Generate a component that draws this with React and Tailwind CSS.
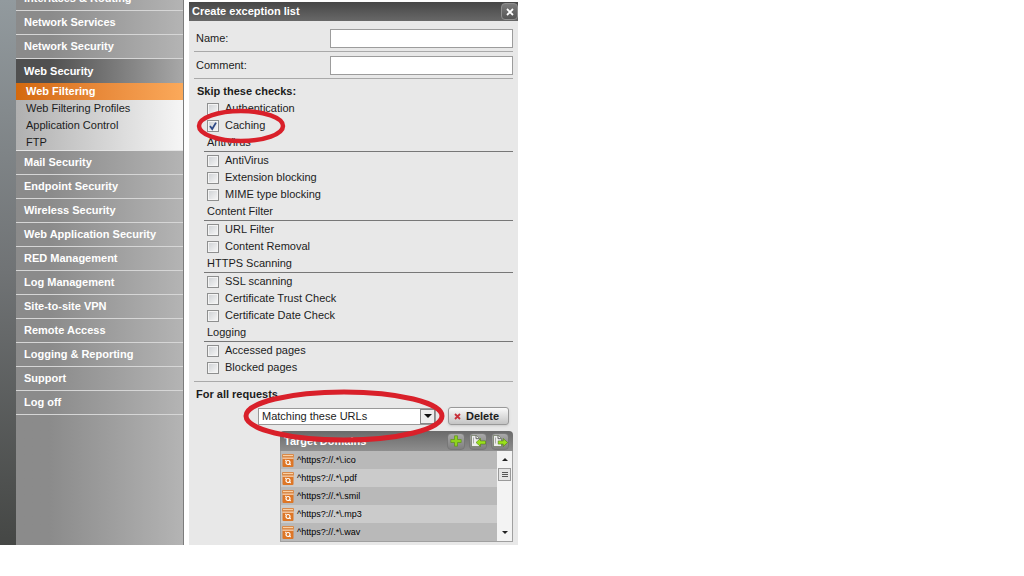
import React, { useState } from 'react';

const topItems = ['Interfaces & Routing', 'Network Services', 'Network Security'];

const subItems = ['Web Filtering', 'Web Filtering Profiles', 'Application Control', 'FTP'];

const bottomItems = [
    'Mail Security',
    'Endpoint Security',
    'Wireless Security',
    'Web Application Security',
    'RED Management',
    'Log Management',
    'Site-to-site VPN',
    'Remote Access',
    'Logging & Reporting',
    'Support',
    'Log off',
];

const sections = [
    { title: 'AntiVirus', checks: ['AntiVirus', 'Extension blocking', 'MIME type blocking'] },
    { title: 'Content Filter', checks: ['URL Filter', 'Content Removal'] },
    { title: 'HTTPS Scanning', checks: ['SSL scanning', 'Certificate Trust Check', 'Certificate Date Check'] },
    { title: 'Logging', checks: ['Accessed pages', 'Blocked pages'] },
];

const domains = ['^https?://.*\\.ico', '^https?://.*\\.pdf', '^https?://.*\\.smil', '^https?://.*\\.mp3', '^https?://.*\\.wav'];

function MenuItem({ label }) {
    return (
        <a href="#" className="flex h-6 items-center border-b border-[#d6d6d6] pl-2 font-bold text-white">
            {label}
        </a>
    );
}

function Sidebar() {
    return (
        <nav className="w-42 shrink-0 overflow-hidden border-r border-[#7c7c7c] bg-linear-to-r from-[#8b8b8b] from-20% to-[#b4b4b4]">
            <div className="-mt-[13px]">
                {topItems.map((item) => (
                    <MenuItem key={item} label={item} />
                ))}
                <a href="#" className="flex h-6 items-center bg-linear-to-r from-[#505050] from-20% to-[#a8a8a8] pl-2 font-bold text-white">
                    Web Security
                </a>
                <div className="h-17 border-b border-[#e4e4e4] bg-linear-to-r from-[#b0b0b0] to-[#f6f6f6]">
                    {subItems.map((item, i) => (
                        <a
                            key={item}
                            href="#"
                            className={
                                i === 0
                                    ? 'flex h-[17px] items-center bg-linear-to-r from-[#d4690c] to-[#fba95a] pl-[10px] font-bold text-white'
                                    : 'flex h-[17px] items-center pl-[10px] text-[#1c1c1c]'
                            }
                        >
                            {item}
                        </a>
                    ))}
                </div>
                {bottomItems.map((item) => (
                    <MenuItem key={item} label={item} />
                ))}
            </div>
        </nav>
    );
}

function Check({ label, defaultChecked, children }) {
    const [checked, setChecked] = useState(!!defaultChecked);
    return (
        <label className="relative flex h-[17px] items-center gap-[6px] pl-[18px]">
            <span className="relative flex size-3">
                <input
                    type="checkbox"
                    checked={checked}
                    onChange={(e) => setChecked(e.target.checked)}
                    className="size-3 appearance-none border border-[#8e8f8f] bg-linear-to-br from-[#cdd0d3] to-[#f8f8f8] shadow-[inset_0_0_0_1px_#f4f4f4]"
                />
                {checked && (
                    <svg viewBox="0 0 12 12" className="pointer-events-none absolute inset-0 size-3">
                        <path d="M3 6l2.2 3L9 2.6" fill="none" stroke="#2f4a86" strokeWidth="1.8" />
                    </svg>
                )}
            </span>
            {label}
            {children}
        </label>
    );
}

function Field({ id, label }) {
    return (
        <div className="flex items-center border-b border-[#a9a9a9] pt-1 pb-[3px] pl-[2px]">
            <label htmlFor={id} className="flex-1">{label}</label>
            <input id={id} type="text" className="h-[19px] w-[183px] border border-[#9c9c9c] bg-white px-1" />
        </div>
    );
}

function DomainIcon() {
    return (
        <svg viewBox="0 0 12 13" className="h-[13px] w-3 shrink-0">
            <rect x="0" y="0" width="12" height="4" rx="1" fill="#d98a4a" />
            <path d="M1 1.5h10" stroke="#f9cfa2" />
            <path d="M0.5 4h11v8a1 1 0 0 1-1 1h-9a1 1 0 0 1-1-1z" fill="#dd7626" />
            <path d="M0.5 4.2h11" stroke="#fbe3cb" />
            <circle cx="6" cy="8.5" r="2" fill="none" stroke="#fff" strokeWidth="1.2" />
            <path d="M3 6.3h1.4M7.4 10l1.6 1" stroke="#fff" />
        </svg>
    );
}

function ToolButton({ label, children }) {
    return (
        <button type="button" aria-label={label} className="flex h-[17px] w-[18px] items-center justify-center rounded-sm border border-[#777] bg-linear-to-b from-[#a9a9a9] to-[#7f7f7f]">
            {children}
        </button>
    );
}

function PageIcon({ arrow }) {
    return (
        <svg viewBox="0 0 16 14" className="h-[14px] w-4 shrink-0">
            <path d="M1.500 1.500h5L9.500 4.500v8h-8z" fill="#ececec" stroke="#5c6b4c" strokeWidth="0.6" />
            <path d="M6 1.500v3.200h3.300" fill="none" stroke="#555" strokeWidth="0.9" />
            <path d="M3.500 3.500v6" stroke="#999" strokeWidth="0.8" />
            <path d={arrow} fill="#9be01c" stroke="#4e7a10" strokeWidth="0.6" />
        </svg>
    );
}

function DomainList() {
    return (
        <div className="mt-[6px] mr-[5px] ml-[91px]">
            <div className="flex h-5 items-center gap-1 rounded-t-sm bg-linear-to-b from-[#6a6a6a] to-[#8e8e8e] px-1 text-white">
                <h3 className="flex-1 font-bold">Target Domains</h3>
                <ToolButton label="Add">
                    <svg viewBox="0 0 12 12" className="size-3 shrink-0">
                        <path d="M4.500 0.800h3v3.700h3.700v3H7.500v3.700h-3V7.500H0.800v-3h3.700z" fill="#8fd41c" stroke="#56861a" strokeWidth="0.6" />
                    </svg>
                </ToolButton>
                <ToolButton label="Import">
                    <PageIcon arrow="M6 8.500l4.500-4v2.400h5v3.200h-5v2.400z" />
                </ToolButton>
                <ToolButton label="Export">
                    <PageIcon arrow="M15.700 8.500l-4.500-4v2.400h-5v3.200h5v2.400z" />
                </ToolButton>
            </div>
            <div className="flex border-r border-b border-[#a0a0a0]">
                <ul className="flex-1 border-l border-[#a0a0a0] text-[9px] text-black">
                    {domains.map((d) => (
                        <li key={d} className="flex h-[18px] items-center gap-[3px] pl-px odd:bg-[#b9b9b9] even:bg-[#cbcbcb]">
                            <DomainIcon />
                            {d}
                        </li>
                    ))}
                </ul>
                <div className="flex w-[15px] flex-col items-center bg-[#f3f3f3]">
                    <button type="button" aria-label="Scroll up" className="flex h-[17px] w-full items-center justify-center">
                        <svg viewBox="0 0 6 3" className="h-[3px] w-[6px]"><path d="M0 3l3-3 3 3z" fill="#222" /></svg>
                    </button>
                    <div className="flex h-[13px] w-[13px] flex-col items-center justify-center gap-px border border-[#9a9a9a] bg-[#e4e4e4]">
                        <span className="h-px w-[6px] bg-[#555]" />
                        <span className="h-px w-[6px] bg-[#555]" />
                        <span className="h-px w-[6px] bg-[#555]" />
                    </div>
                    <button type="button" aria-label="Scroll down" className="mt-auto flex h-[17px] w-full items-center justify-center">
                        <svg viewBox="0 0 6 3" className="h-[3px] w-[6px]"><path d="M0 0l3 3 3-3z" fill="#222" /></svg>
                    </button>
                </div>
            </div>
        </div>
    );
}

function ExceptionDialog() {
    return (
        <section className="mt-[2px] max-w-[329px] flex-1 bg-[#e8e8e8]">
            <header className="flex h-[19px] items-center justify-between bg-linear-to-b from-[#474747] to-[#686868] pl-[3px] text-white">
                <h1 className="font-bold">Create exception list</h1>
                <button type="button" aria-label="Close" className="flex size-[17px] items-center justify-center rounded-sm border border-[#8e8e8e] bg-linear-to-b from-[#7c7c7c] to-[#555]">
                    <svg viewBox="0 0 8 8" className="size-2"><path d="M1 1l6 6M7 1L1 7" stroke="#fff" strokeWidth="1.8" /></svg>
                </button>
            </header>
            <form className="px-[5px] pt-1 pb-1">
                <Field id="name" label="Name:" />
                <Field id="comment" label="Comment:" />
            </form>
            <h2 className="flex h-[17px] items-center pl-2 font-bold">Skip these checks:</h2>
            <Check label="Authentication" />
            <Check label="Caching" defaultChecked>
                <svg viewBox="0 0 90 36" className="pointer-events-none absolute -top-[9px] left-[7px] z-10 h-9 w-[90px]">
                    <ellipse cx="45" cy="18" rx="42" ry="15" fill="none" stroke="#d9202a" strokeWidth="4.500" />
                </svg>
            </Check>
            {sections.map((s) => (
                <div key={s.title}>
                    <h3 className="mr-[5px] ml-[15px] flex h-[18px] items-center border-b border-[#777] pl-[3px]">{s.title}</h3>
                    {s.checks.map((c) => (
                        <Check key={c} label={c} />
                    ))}
                </div>
            ))}
            <div className="mx-[5px] mt-[5px] border-t border-[#aaa]" />
            <h2 className="mt-1 flex h-[17px] items-center pl-[7px] font-bold">For all requests</h2>
            <div className="relative mt-1 flex items-center pr-[9px] pl-[69px]">
                <div className="relative flex-1">
                    <select aria-label="Request condition" className="block h-[17px] w-full appearance-none border border-[#999] bg-white pl-[3px]">
                        <option>Matching these URLs</option>
                    </select>
                    <span className="pointer-events-none absolute top-px right-px flex h-[15px] w-[15px] items-center justify-center border border-[#888] bg-[#eee]">
                        <svg viewBox="0 0 8 4" className="h-1 w-2"><path d="M0 0h8l-4 4z" fill="#111" /></svg>
                    </span>
                </div>
                <button type="button" className="ml-3 flex h-[18px] w-[61px] items-center gap-[5px] rounded-[3px] border border-[#999] bg-linear-to-b from-[#fafafa] to-[#c4c4c4] pl-[5px] font-bold shadow-sm">
                    <svg viewBox="0 0 7 7" className="size-[7px] shrink-0"><path d="M1 1l5 5M6 1L1 6" stroke="#c8303a" strokeWidth="1.8" /></svg>
                    Delete
                </button>
                <svg viewBox="0 0 206 54" className="pointer-events-none absolute -top-[18px] left-[52px] z-10 h-[54px] w-[206px]">
                    <ellipse cx="103" cy="27" rx="98" ry="24" fill="none" stroke="#d9202a" strokeWidth="5" />
                </svg>
            </div>
            <DomainList />
            <div className="h-[3px]" />
        </section>
    );
}

export default function App() {
    return (
        <div className="min-h-screen bg-white font-['Liberation_Sans',Arial,sans-serif] text-[11px] leading-none text-[#1c1c1c]">
            <div className="flex">
                <div className="w-4 shrink-0 bg-linear-to-b from-[#929a9e] via-[#707375] to-[#454745]" />
                <Sidebar />
                <div className="w-[5px] shrink-0" />
                <ExceptionDialog />
            </div>
        </div>
    );
}
